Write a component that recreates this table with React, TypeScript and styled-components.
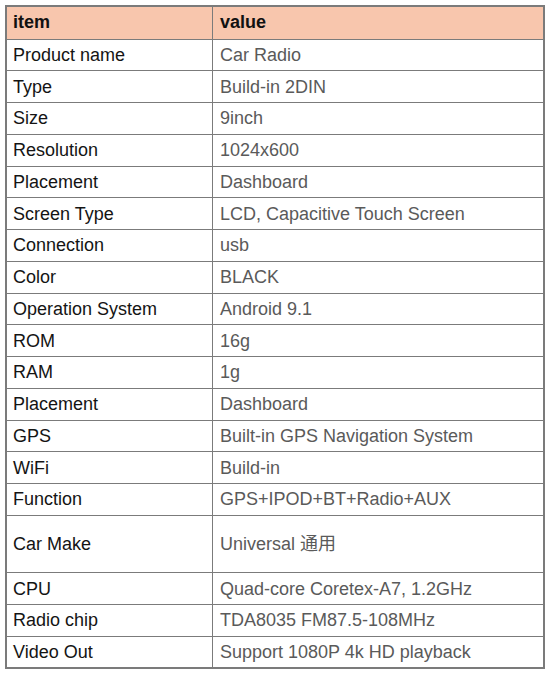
import React from 'react';
import styled, {createGlobalStyle} from 'styled-components';

interface Spec {
  item: string;
  value: string;
  tall?: boolean;
}

const specs: Spec[] = [
  {item: 'Product name', value: 'Car Radio'},
  {item: 'Type', value: 'Build-in 2DIN'},
  {item: 'Size', value: '9inch'},
  {item: 'Resolution', value: '1024x600'},
  {item: 'Placement', value: 'Dashboard'},
  {item: 'Screen Type', value: 'LCD, Capacitive Touch Screen'},
  {item: 'Connection', value: 'usb'},
  {item: 'Color', value: 'BLACK'},
  {item: 'Operation System', value: 'Android 9.1'},
  {item: 'ROM', value: '16g'},
  {item: 'RAM', value: '1g'},
  {item: 'Placement', value: 'Dashboard'},
  {item: 'GPS', value: 'Built-in GPS Navigation System'},
  {item: 'WiFi', value: 'Build-in'},
  {item: 'Function', value: 'GPS+IPOD+BT+Radio+AUX'},
  {item: 'Car Make', value: 'Universal 通用', tall: true},
  {item: 'CPU', value: 'Quad-core Coretex-A7, 1.2GHz'},
  {item: 'Radio chip', value: 'TDA8035 FM87.5-108MHz'},
  {item: 'Video Out', value: 'Support 1080P 4k HD playback'}
];

const GlobalStyle = createGlobalStyle`
  body {
    margin: 0;
    background: #ffffff;
    font-family: "Liberation Sans", Arial, "Noto Sans CJK SC", sans-serif;
  }
`;

const Page = styled.div`
  padding: 5px 0 0 5px;
`;

const Table = styled.table`
  width: 540px;
  border-collapse: collapse;
  border: 2px solid #7b7b7b;
  table-layout: fixed;
  font-size: 18px;
`;

const HeadCell = styled.th`
  background: #f8c6ad;
  color: #111111;
  font-weight: 700;
  text-align: left;
  height: 31.5px;
  padding: 0 6px;
  border: 1px solid #7b7b7b;
  &:first-child {
    width: 193px;
  }
  &:last-child {
    padding-left: 7px;
  }
`;

const Row = styled.tr<{$tall?: boolean}>`
  height: ${props => (props.$tall ? '57.5px' : '31.75px')};
`;

const Cell = styled.td<{$muted?: boolean}>`
  padding: 0 ${props => (props.$muted ? '7px' : '6px')};
  border: 1px solid #7b7b7b;
  color: ${props => (props.$muted ? '#5a5a5a' : '#141414')};
  vertical-align: middle;
  white-space: nowrap;
  line-height: 20px;
`;

const App: React.FC = () => (
  <Page>
    <GlobalStyle />
    <Table>
      <thead>
        <tr>
          <HeadCell>item</HeadCell>
          <HeadCell>value</HeadCell>
        </tr>
      </thead>
      <tbody>
        {specs.map((spec, i) => (
          <Row key={i} $tall={spec.tall}>
            <Cell>{spec.item}</Cell>
            <Cell $muted>{spec.value}</Cell>
          </Row>
        ))}
      </tbody>
    </Table>
  </Page>
);

export default App;
